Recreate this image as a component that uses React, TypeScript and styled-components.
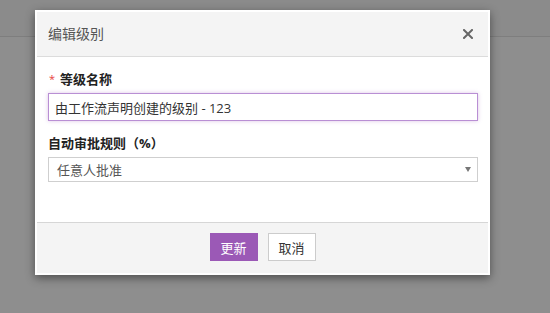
import React from "react";
import styled, { createGlobalStyle } from "styled-components";

const Global = createGlobalStyle`
  html, body { margin: 0; padding: 0; }
  body {
    width: 550px;
    height: 313px;
    overflow: hidden;
    background: #8e8e8e;
    font-family: "Open Sans", "Noto Sans CJK SC", sans-serif;
  }
  * { box-sizing: border-box; }
`;

const Page = styled.div`
  width: 550px;
  height: 313px;
  position: relative;
`;

const TopBar = styled.div`
  height: 37px;
  background: #8b8b8b;
  border-bottom: 1px solid #7e7e7e;
`;

const Overlay = styled.div`
  position: absolute;
  inset: 0;
  padding: 10px 0 0 35px;
`;

const Modal = styled.div`
  width: 455px;
  background: #fff;
  border: 2px solid #fff;
  box-shadow: 0 3px 9px rgba(0, 0, 0, 0.45);
  display: flex;
  flex-direction: column;
`;

const Header = styled.div`
  height: 45px;
  background: #f4f4f4;
  border-bottom: 1px solid #dcdcdc;
  display: flex;
  align-items: center;
  justify-content: space-between;
  padding: 0 15px 0 11px;
`;

const Title = styled.div`
  font-size: 14px;
  color: #555;
  line-height: 18px;
`;

const Close = styled.button`
  width: 10px;
  height: 10px;
  padding: 0;
  border: 0;
  background: transparent;
  display: flex;
  cursor: pointer;
`;

const Body = styled.div`
  padding: 13px 10px 40px 11px;
  display: flex;
  flex-direction: column;
`;

const Label = styled.div<{ $gap?: number }>`
  font-size: 13px;
  font-weight: 700;
  color: #222;
  line-height: 18px;
  margin-top: ${(p) => p.$gap ?? 0}px;
  margin-bottom: 5px;
  display: flex;
  align-items: center;
`;

const Star = styled.span`
  color: #e8413c;
  font-size: 11px;
  font-weight: 400;
  margin-right: 5px;
  margin-left: 1px;
  line-height: 10px;
`;

const Input = styled.input`
  width: 430px;
  height: 28px;
  border: 1px solid #b98fd4;
  box-shadow: 0 0 4px rgba(155, 89, 182, 0.35);
  padding: 0 6px;
  font-family: inherit;
  font-size: 13px;
  color: #333;
  outline: none;
  background: #fff;
`;

const Select = styled.div`
  width: 430px;
  height: 25px;
  border: 1px solid #cfcfcf;
  display: flex;
  align-items: center;
  justify-content: space-between;
  padding: 0 6px 0 8px;
  font-size: 13px;
  color: #555;
`;

const Caret = styled.span`
  width: 0;
  height: 0;
  border-left: 3.5px solid transparent;
  border-right: 3.5px solid transparent;
  border-top: 5px solid #777;
`;

const Footer = styled.div`
  background: #f4f4f4;
  border-top: 1px solid #d6d6d6;
  height: 51px;
  display: flex;
  justify-content: center;
  gap: 10px;
  padding-top: 10px;
`;

const Button = styled.button<{ $primary?: boolean }>`
  height: 28px;
  width: ${(p) => (p.$primary ? 48 : 48)}px;
  padding: 0;
  font-family: inherit;
  font-size: 13px;
  border: 1px solid ${(p) => (p.$primary ? "#9b59b6" : "#cccccc")};
  background: ${(p) => (p.$primary ? "#9b59b6" : "#ffffff")};
  color: ${(p) => (p.$primary ? "#ffffff" : "#333333")};
  cursor: pointer;
`;

export default function App() {
  return (
    <>
      <Global />
      <Page>
        <TopBar />
        <Overlay>
          <Modal>
            <Header>
              <Title>编辑级别</Title>
              <Close aria-label="close">
                <svg width="10" height="10" viewBox="0 0 10 10">
                  <path d="M1 1L9 9M9 1L1 9" stroke="#666" strokeWidth="2" strokeLinecap="square" />
                </svg>
              </Close>
            </Header>
            <Body>
              <Label>
                <Star>*</Star>等级名称
              </Label>
              <Input defaultValue="由工作流声明创建的级别 - 123" />
              <Label $gap={13}>自动审批规则（%）</Label>
              <Select>
                <span>任意人批准</span>
                <Caret />
              </Select>
            </Body>
            <Footer>
              <Button $primary>更新</Button>
              <Button>取消</Button>
            </Footer>
          </Modal>
        </Overlay>
      </Page>
    </>
  );
}
